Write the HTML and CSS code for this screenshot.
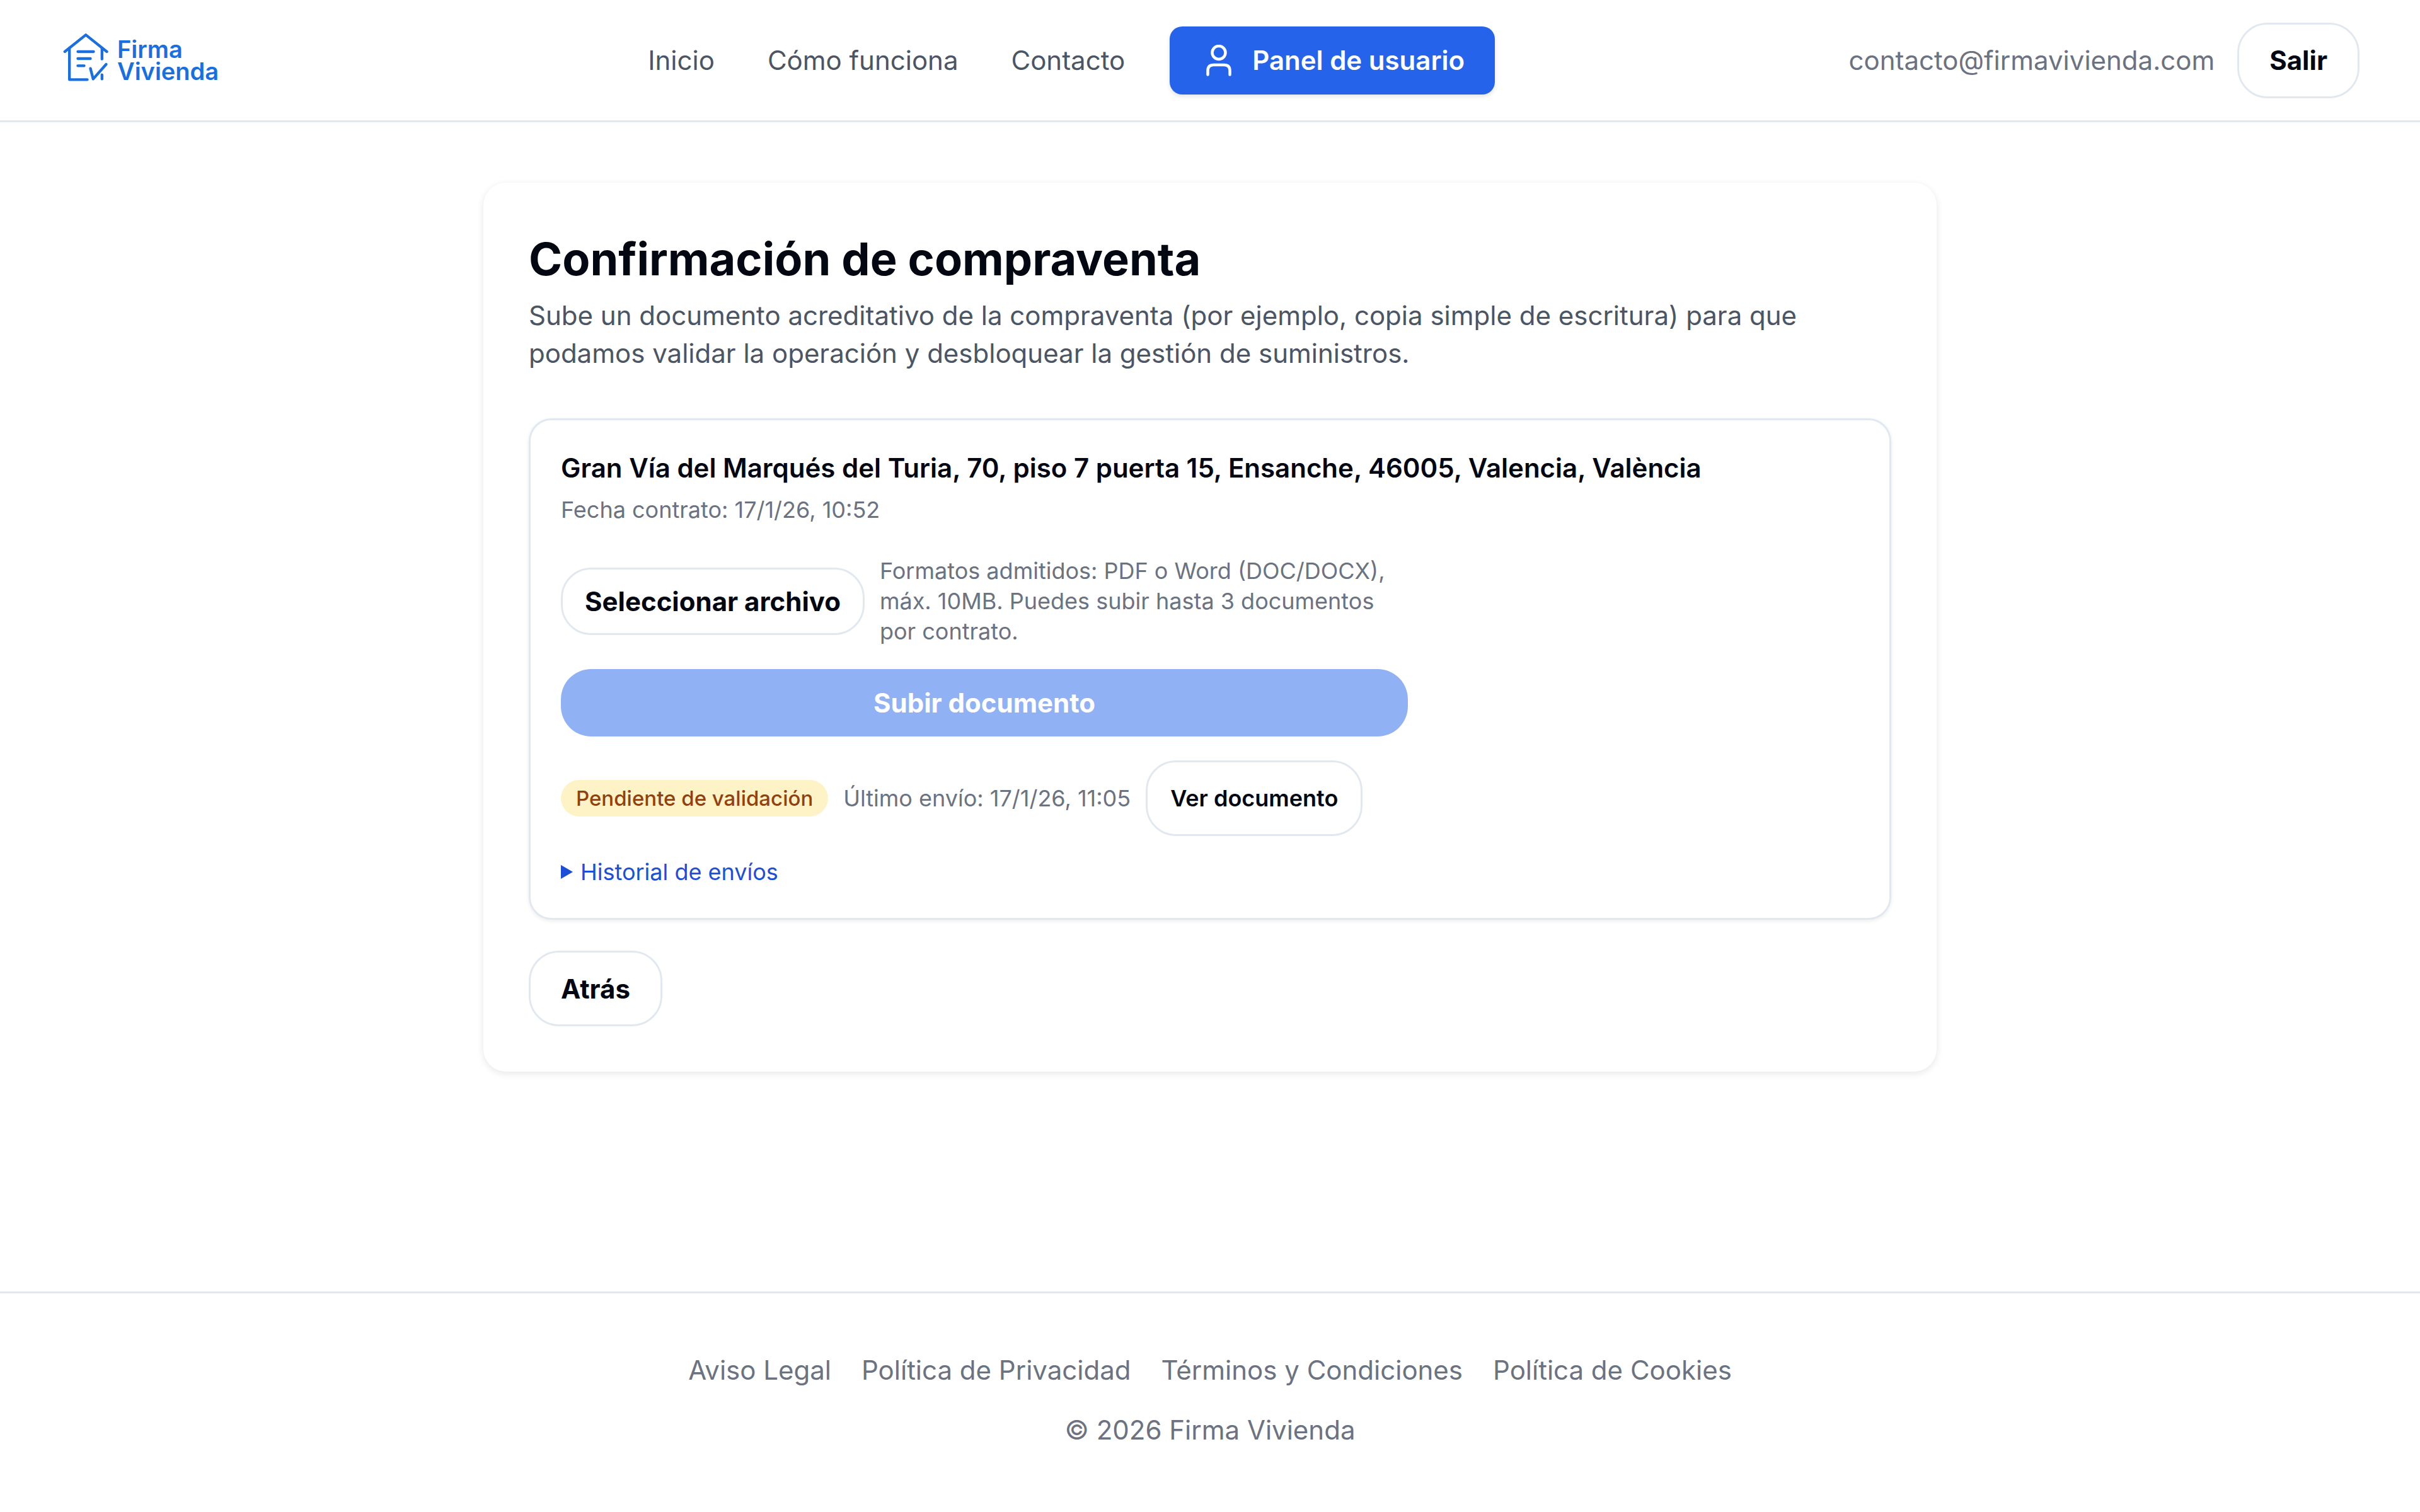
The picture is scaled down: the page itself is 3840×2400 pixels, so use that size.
FILE: index.html
```html
<!DOCTYPE html>
<html lang="es">

<head>
    <meta charset="UTF-8">
    <title>Confirmación de compraventa - Firma Vivienda</title>
    <link rel="stylesheet" href="styles.css">
</head>

<body>

    <!-- Header -->
    <header class="site-header">
        <a class="logo" href="#">
            <svg class="logo-icon" viewBox="125 98 215 228" fill="none" stroke="currentColor" stroke-width="13" stroke-linecap="round" stroke-linejoin="round">
                <path d="M133 185 L233 105 L333 185" />
                <path d="M155 168 V318 H240" />
                <path d="M310 168 V220" />
                <path d="M195 185 H270 M195 218 H255 M195 252 H225" />
                <path d="M255 265 L268 315 L330 245" />
                <path d="M310 295 V315" />
            </svg>
            <span class="logo-text">Firma<br>Vivienda</span>
        </a>

        <nav class="main-nav">
            <a href="#">Inicio</a>
            <a href="#">Cómo funciona</a>
            <a href="#">Contacto</a>
            <a class="panel-btn" href="#">
                <svg class="panel-icon" viewBox="0 0 40 50" fill="none" stroke="currentColor" stroke-width="4.5" stroke-linecap="round">
                    <circle cx="20" cy="12.5" r="10.5" />
                    <path d="M2.5 47.5 V41 Q2.5 32 12 32 H28 Q37.5 32 37.5 41 V47.5" />
                </svg>
                Panel de usuario
            </a>
        </nav>

        <div class="user-box">
            <span class="user-email">contacto@firmavivienda.com</span>
            <button type="button" class="btn-outline">Salir</button>
        </div>
    </header>

    <!-- Main content -->
    <main class="content">
        <section class="card">
            <h1 class="title">Confirmación de compraventa</h1>
            <p class="intro">Sube un documento acreditativo de la compraventa (por ejemplo, copia simple de escritura) para que podamos validar la operación y desbloquear la gestión de suministros.</p>

            <div class="contract">
                <h2 class="address">Gran Vía del Marqués del Turia, 70, piso 7 puerta 15, Ensanche, 46005, Valencia, València</h2>
                <p class="contract-date">Fecha contrato: 17/1/26, 10:52</p>

                <div class="upload">
                    <div class="file-row">
                        <button type="button" class="btn-file">Seleccionar archivo</button>
                        <p class="hint">Formatos admitidos: PDF o Word (DOC/DOCX), máx. 10MB. Puedes subir hasta 3 documentos por contrato.</p>
                    </div>
                    <button type="button" class="btn-upload">Subir documento</button>
                </div>

                <div class="status-row">
                    <span class="badge">Pendiente de validación</span>
                    <span class="last-sent">Último envío: 17/1/26, 11:05</span>
                    <button type="button" class="btn-outline btn-small">Ver documento</button>
                </div>

                <details class="history">
                    <summary>Historial de envíos</summary>
                </details>
            </div>

            <button type="button" class="btn-outline">Atrás</button>
        </section>
    </main>

    <!-- Footer -->
    <footer class="site-footer">
        <div class="footer-links">
            <a href="#">Aviso Legal</a>
            <a href="#">Política de Privacidad</a>
            <a href="#">Términos y Condiciones</a>
            <a href="#">Política de Cookies</a>
        </div>
        <p class="copyright">© 2026 Firma Vivienda</p>
    </footer>

</body>

</html>
```

FILE: styles.css
```css
/* General Styles */
* {
    box-sizing: border-box;
}

body {
    font-family: "Inter", "Liberation Sans", sans-serif;
    background: #ffffff;
    color: #030712;
    margin: 0;
    min-height: 2400px;
    display: flex;
    flex-direction: column;
}

a {
    text-decoration: none;
}

/* Header */
.site-header {
    height: 194px;
    padding: 0 96px 0 100px;
    display: flex;
    align-items: center;
    justify-content: space-between;
    border-bottom: 3px solid #e2e8f0;
}

.logo {
    width: 367px;
    display: flex;
    align-items: center;
    gap: 14px;
    color: #1a6fe0;
}

.logo-icon {
    width: 72px;
    height: 76px;
    margin-bottom: 10px;
}

.logo-text {
    font-size: 38px;
    line-height: 35px;
    font-weight: 600;
}

.main-nav {
    display: flex;
    align-items: center;
    gap: 84px;
    font-size: 42px;
}

.main-nav a {
    color: #4b5563;
}

.main-nav .panel-btn {
    width: 516px;
    height: 108px;
    margin-left: -13px;
    padding-left: 58px;
    display: flex;
    align-items: center;
    gap: 33px;
    background: #2563eb;
    color: #ffffff;
    font-weight: 600;
    border-radius: 20px;
    box-shadow: 0 3px 6px rgba(15, 23, 42, 0.12);
}

.panel-icon {
    width: 40px;
    height: 50px;
}

.user-box {
    display: flex;
    align-items: center;
    gap: 36px;
}

.user-email {
    font-size: 42px;
    color: #6b7280;
}

/* Buttons */
.btn-outline {
    height: 120px;
    padding: 0 48px;
    font-family: inherit;
    font-size: 42px;
    font-weight: 700;
    color: #030712;
    background: #ffffff;
    border: 3px solid #e2e8f0;
    border-radius: 48px;
}

.btn-small {
    font-size: 36px;
    font-weight: 600;
    padding: 0 36px;
}

.btn-file {
    flex-shrink: 0;
    height: 107px;
    padding: 0 35px;
    font-family: inherit;
    font-size: 42px;
    font-weight: 700;
    color: #030712;
    background: #ffffff;
    border: 3px solid #e2e8f0;
    border-radius: 48px;
}

.btn-upload {
    height: 107px;
    font-family: inherit;
    font-size: 42px;
    font-weight: 700;
    color: #ffffff;
    background: #91b1f5;
    border: none;
    border-radius: 48px;
}

/* Main Card */
.content {
    flex: 1;
    padding-top: 96px;
    display: flex;
    justify-content: center;
    align-items: flex-start;
}

.card {
    width: 2306px;
    padding: 77px 72px 72px;
    background: #ffffff;
    border-radius: 36px;
    box-shadow: 0 3px 12px rgba(15, 23, 42, 0.1);
}

.title {
    margin: 0 0 16px;
    font-size: 72px;
    line-height: 88px;
    font-weight: 700;
}

.intro {
    margin: 0 0 73px;
    font-size: 42px;
    line-height: 60px;
    color: #4b5563;
}

/* Contract Card */
.contract {
    margin-bottom: 49px;
    padding: 48px 48px 49px;
    border: 3px solid #e2e8f0;
    border-radius: 36px;
    box-shadow: 0 2px 6px rgba(15, 23, 42, 0.08);
}

.address {
    margin: 0 0 14px;
    font-size: 42px;
    line-height: 56px;
    font-weight: 600;
}

.contract-date {
    margin: 0 0 49px;
    font-size: 36px;
    line-height: 48px;
    color: #6b7280;
}

.upload {
    width: 1344px;
    display: flex;
    flex-direction: column;
    gap: 36px;
}

.file-row {
    display: flex;
    align-items: center;
    gap: 24px;
}

.hint {
    margin: 0;
    font-size: 36px;
    line-height: 48px;
    color: #6b7280;
}

.status-row {
    margin-top: 38px;
    display: flex;
    align-items: center;
    gap: 24px;
}

.badge {
    height: 58px;
    padding: 0 24px;
    display: flex;
    align-items: center;
    font-size: 33px;
    font-weight: 500;
    color: #92400e;
    background: #fef3c7;
    border-radius: 29px;
}

.last-sent {
    font-size: 36px;
    color: #6b7280;
}

/* History */
.history {
    margin-top: 33px;
    font-size: 36px;
    line-height: 48px;
    color: #1d4ed8;
}

.history summary {
    display: flex;
    align-items: center;
    gap: 12px;
    list-style: none;
}

.history summary::before {
    content: "";
    border-left: 19px solid #1d4ed8;
    border-top: 11px solid transparent;
    border-bottom: 11px solid transparent;
}

/* Footer */
.site-footer {
    height: 350px;
    padding-top: 96px;
    border-top: 3px solid #e2e8f0;
    text-align: center;
    font-size: 42px;
    color: #6b7280;
}

.footer-links {
    display: flex;
    justify-content: center;
    gap: 48px;
}

.footer-links a {
    color: #6b7280;
}

.copyright {
    margin: 44px 0 0;
}
```
